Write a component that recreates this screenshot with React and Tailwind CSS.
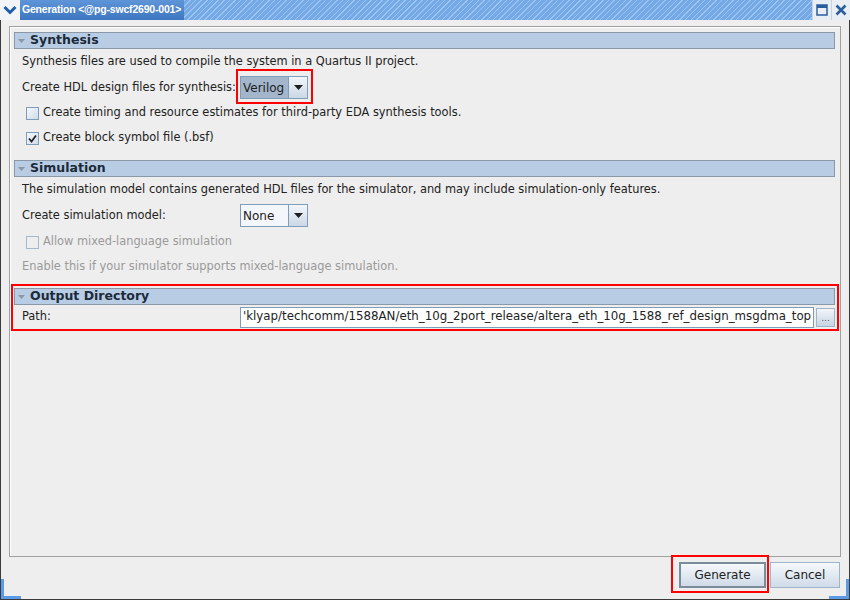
import React from 'react'

const font = { fontFamily: '"DejaVu Sans", "Liberation Sans", sans-serif' }

function Header({ title }) {
  return (
    <div className="flex h-[17px] items-center border border-[#8a99a8] bg-[#b8cde4] pl-[3px]">
      <svg width="7" height="6" viewBox="0 0 7 6" className="mr-[5px]">
        <path d="M0 1 L7 1 L3.5 5 Z" fill="#8a97a6" />
      </svg>
      <span className="whitespace-nowrap text-[12.5px] font-bold leading-none text-[#1c2a3a]">{title}</span>
    </div>
  )
}

function Checkbox({ checked, disabled }) {
  return (
    <span
      className={`flex h-[13px] w-[13px] shrink-0 items-center justify-center border ${
        disabled ? 'border-[#a8b8c8] bg-[#eeeeee]' : 'border-[#7f9db9] bg-gradient-to-br from-[#f4f8fc] to-[#cfdcea]'
      }`}
    >
      {checked && (
        <svg width="9" height="9" viewBox="0 0 9 9">
          <path d="M1 4.5 L3.5 7.5 L8 1.5" stroke="#222" strokeWidth="1.8" fill="none" />
        </svg>
      )}
    </span>
  )
}

function Combo({ value, selected }) {
  return (
    <div className="flex h-[23px] w-[68px] border border-[#7f9db9]">
      <div
        className={`flex flex-1 items-center pl-[2px] text-[12px] text-[#222] ${
          selected ? 'bg-[#a3b6cc]' : 'bg-[#f3f6fa]'
        }`}
      >
        {value}
      </div>
      <div className="flex w-[19px] items-center justify-center border-l border-[#7f9db9] bg-gradient-to-b from-[#f3f6fa] to-[#cbd8e6]">
        <svg width="9" height="5" viewBox="0 0 9 5">
          <path d="M0 0 L9 0 L4.5 5 Z" fill="#1e1e1e" />
        </svg>
      </div>
    </div>
  )
}

function RedBox({ className }) {
  return <div className={`pointer-events-none absolute border-2 border-[#ff0000] ${className}`} />
}

export default function App() {
  return (
    <div style={font} className="relative flex h-[600px] w-[850px] flex-col overflow-hidden bg-[#eeeeee] text-[11.4px] text-[#222]">
      {/* title bar */}
      <div className="flex h-[20px] shrink-0 bg-[#7aaee8]">
        <div className="flex w-[20px] items-center justify-center bg-[#f2f4f7]">
          <svg width="14" height="10" viewBox="0 0 14 10">
            <path d="M1.5 2 L7 7.5 L12.5 2" stroke="#1d5ea8" strokeWidth="3" fill="none" />
          </svg>
        </div>
        <div className="flex shrink-0 items-center whitespace-nowrap bg-gradient-to-b from-[#5f95d8] to-[#3d76c0] pl-[2px] pr-[3px] font-['Liberation_Sans',sans-serif] text-[10.5px] font-bold tracking-[-0.2px] text-white">
          Generation &lt;@pg-swcf2690-001&gt;
        </div>
        <div className="flex-1 bg-[#74a9e5] bg-[repeating-linear-gradient(135deg,#9bc4f0_0px,#9bc4f0_1px,transparent_1px,transparent_4px)]" />
        <div className="flex w-[19px] items-center justify-center border-l border-[#c8d2de] bg-[#e9eef5]">
          <svg width="12" height="12" viewBox="0 0 12 12">
            <rect x="1" y="1" width="10" height="10" fill="none" stroke="#2a5d9c" strokeWidth="1.5" />
            <rect x="1" y="1" width="10" height="3" fill="#2a5d9c" />
          </svg>
        </div>
        <div className="flex w-[19px] items-center justify-center border-l border-[#c8d2de] bg-[#e9eef5]">
          <svg width="12" height="12" viewBox="0 0 12 12">
            <path d="M1.5 1.5 L10.5 10.5 M10.5 1.5 L1.5 10.5" stroke="#2a5d9c" strokeWidth="2.6" />
          </svg>
        </div>
      </div>

      {/* body */}
      <div className="flex flex-1 flex-col border-x border-b border-[#3a3a3a] pl-[8px] pr-[8px] pt-[6px]">
        <div className="h-[531px] border border-[#a0a0a0] pl-[4px] pr-[5px] pt-[5px] shadow-[inset_1px_1px_0_#ffffff]">
          <Header title="Synthesis" />
          <div className="mt-[4px] flex h-[18px] items-center whitespace-nowrap pl-[8px]">
            Synthesis files are used to compile the system in a Quartus II project.
          </div>
          <div className="mt-[4px] flex h-[25px] items-center pl-[8px]">
            <span className="w-[218px] whitespace-nowrap">Create HDL design files for synthesis:</span>
            <div className="relative">
              <Combo value="Verilog" selected />
              <RedBox className="-left-[4px] -right-[5px] -top-[7px] -bottom-[5px]" />
            </div>
          </div>
          <div className="mt-[4px] flex h-[18px] items-center gap-[4px] whitespace-nowrap pl-[12px]">
            <Checkbox />
            <span>Create timing and resource estimates for third-party EDA synthesis tools.</span>
          </div>
          <div className="mt-[7px] flex h-[18px] items-center gap-[4px] whitespace-nowrap pl-[12px]">
            <Checkbox checked />
            <span>Create block symbol file (.bsf)</span>
          </div>

          <div className="mt-[13px]">
            <Header title="Simulation" />
          </div>
          <div className="mt-[4px] flex h-[18px] items-center whitespace-nowrap pl-[8px]">
            The simulation model contains generated HDL files for the simulator, and may include simulation-only features.
          </div>
          <div className="mt-[4px] flex h-[25px] items-center pl-[8px]">
            <span className="w-[218px] whitespace-nowrap">Create simulation model:</span>
            <Combo value="None" />
          </div>
          <div className="mt-[5px] flex h-[18px] items-center gap-[4px] whitespace-nowrap pl-[12px] text-[#9a9a9a]">
            <Checkbox disabled />
            <span>Allow mixed-language simulation</span>
          </div>
          <div className="mt-[7px] flex h-[18px] items-center whitespace-nowrap pl-[8px] text-[#9a9a9a]">
            Enable this if your simulator supports mixed-language simulation.
          </div>

          <div className="relative mt-[12px]">
            <Header title="Output Directory" />
            <div className="mt-[1px] flex h-[22px] items-center pl-[8px]">
              <span className="w-[218px]">Path:</span>
              <div className="flex h-[21px] w-[574px] items-center overflow-hidden whitespace-nowrap border border-[#7f9db9] bg-white px-[2px] text-[11.8px]">
                'klyap/techcomm/1588AN/eth_10g_2port_release/altera_eth_10g_1588_ref_design_msgdma_top
              </div>
              <div className="ml-[2px] flex h-[19px] w-[19px] items-end justify-center border border-[#9fb3c9] bg-gradient-to-b from-[#f3f6fa] to-[#c6d4e4] pb-[3px] text-[9px] leading-none text-[#555]">
                ...
              </div>
            </div>
            <RedBox className="-left-[3px] -right-[4px] -top-[4px] -bottom-[3px]" />
          </div>
        </div>

        {/* buttons */}
        <div className="mt-[5px] flex justify-end gap-[4px] pr-[1px]">
          <div className="relative">
            <button className="flex h-[26px] w-[87px] items-center justify-center border-2 border-[#7d8c9c] bg-gradient-to-b from-[#f5f8fb] to-[#cfdbe8] text-[12px] text-[#222]">
              Generate
            </button>
            <RedBox className="-left-[8px] -right-[3px] -top-[7px] -bottom-[5px]" />
          </div>
          <button className="flex h-[26px] w-[70px] items-center justify-center border border-[#9fb3c9] bg-gradient-to-b from-[#f5f8fb] to-[#cfdbe8] text-[12px] text-[#222]">
            Cancel
          </button>
        </div>
      </div>

      {/* window corner accents */}
      <div className="absolute bottom-[1px] left-[1px] h-[20px] w-[20px] border-b-[3px] border-l-[3px] border-[#5a9ae6]" />
      <div className="absolute bottom-[1px] right-[1px] h-[20px] w-[20px] border-b-[3px] border-r-[3px] border-[#5a9ae6]" />
    </div>
  )
}
